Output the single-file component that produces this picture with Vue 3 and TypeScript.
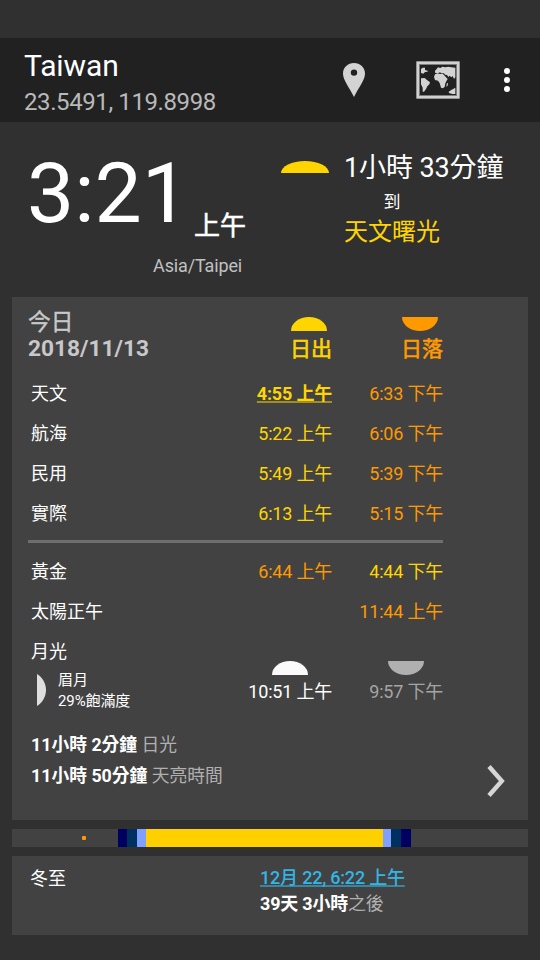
<script setup lang="ts">
interface TimeRow {
  label: string
  rise?: string
  set?: string
  riseTone?: string
  setTone?: string
  current?: boolean
}

const twilight: TimeRow[] = [
  { label: '天文', rise: '4:55 上午', set: '6:33 下午', riseTone: 'yellow', setTone: 'orange', current: true },
  { label: '航海', rise: '5:22 上午', set: '6:06 下午', riseTone: 'yellow', setTone: 'orange' },
  { label: '民用', rise: '5:49 上午', set: '5:39 下午', riseTone: 'yellow', setTone: 'orange' },
  { label: '實際', rise: '6:13 上午', set: '5:15 下午', riseTone: 'yellow', setTone: 'orange' },
]

const extra: TimeRow[] = [
  { label: '黃金', rise: '6:44 上午', set: '4:44 下午', riseTone: 'orange', setTone: 'yellow' },
  { label: '太陽正午', set: '11:44 上午', setTone: 'orange' },
]

const lightmap: { width: number; color: string }[] = [
  { width: 106, color: '#424242' },
  { width: 9, color: '#000060' },
  { width: 10, color: '#003060' },
  { width: 9, color: '#80a0ff' },
  { width: 237, color: '#ffd000' },
  { width: 8, color: '#80a0ff' },
  { width: 10, color: '#003060' },
  { width: 10, color: '#000060' },
  { width: 117, color: '#424242' },
]
</script>

<template>
  <main class="screen">
    <header class="bar">
      <div class="place">
        <h1>Taiwan</h1>
        <p>23.5491, 119.8998</p>
      </div>
      <nav class="actions">
        <svg class="pin" viewBox="0 0 22 34" width="22" height="34">
          <path fill="#d3d3d3" fill-rule="evenodd" d="M11 0C4.9 0 0 4.6 0 10.5C0 17 5.8 23.5 11 34C16.2 23.5 22 17 22 10.5C22 4.6 17.1 0 11 0ZM11 6.4A3.2 3.2 0 1 1 11 12.8A3.2 3.2 0 1 1 11 6.4Z" />
        </svg>
        <svg class="map" viewBox="0 0 132 114" width="44" height="38">
          <rect x="1" y="1" width="130" height="112" fill="#d0d0d0" />
          <rect x="9" y="9" width="114" height="96" fill="#7c7c7c" />
          <rect x="12" y="12" width="108" height="90" fill="#212121" />
          <g fill="#d3d3d3">
            <path d="M15 24L20 20L27 20L27 27L35 29L35 32L27 33L22 38L15 36Z" />
            <path d="M15 52L26 51L32 56L42 64L40 70L34 76L30 84L24 92L20 92L20 80L15 70Z" />
            <path d="M57 29L62 24L66 19L73 21L79 17L88 19L97 17L106 19L118 20L118 49L114 54L110 45L106 49L101 44L97 48L93 42L87 41L84 37L76 37L72 34L66 37L57 35Z" />
            <path d="M57 40L64 37L72 39L80 38L86 44L92 51L95 54L91 61L88 67L86 78L80 82L75 80L71 66L66 59L57 57L54 48Z" />
            <path d="M92 68L96 65L95 74L91 77ZM98 92L107 86L113 83L118 80L118 99L109 99L99 96Z" />
          </g>
        </svg>
        <svg class="more" viewBox="0 0 6 24" width="6" height="24">
          <circle cx="3" cy="3" r="3" fill="#fff" />
          <circle cx="3" cy="12" r="3" fill="#fff" />
          <circle cx="3" cy="21" r="3" fill="#fff" />
        </svg>
      </nav>
    </header>

    <section class="hero">
      <div class="clock">
        <div class="now"><span class="digits">3:21</span><span class="ampm">上午</span></div>
        <p class="zone">Asia/Taipei</p>
      </div>
      <span class="dome wide yellow-bg"></span>
      <div class="next">
        <p class="remain">1小時 33分鐘</p>
        <p class="until">到</p>
        <p class="event yellow">天文曙光</p>
      </div>
    </section>

    <section class="card today">
      <div class="row head">
        <div class="date"><span>今日</span><b>2018/11/13</b></div>
        <div class="col yellow"><span class="dome yellow-bg"></span><b>日出</b></div>
        <div class="col orange"><span class="dome down orange-bg"></span><b>日落</b></div>
      </div>

      <div v-for="r in twilight" :key="r.label" class="row">
        <span class="label">{{ r.label }}</span>
        <span :class="['time', r.riseTone, { current: r.current }]">{{ r.rise }}</span>
        <span :class="['time', r.setTone]">{{ r.set }}</span>
      </div>
      <hr />
      <div v-for="r in extra" :key="r.label" class="row">
        <span class="label">{{ r.label }}</span>
        <span :class="['time', r.riseTone]">{{ r.rise }}</span>
        <span :class="['time', r.setTone]">{{ r.set }}</span>
      </div>

      <div class="row moon">
        <div class="label">
          <span>月光</span>
          <div class="phase">
            <svg viewBox="0 0 9 32" width="9" height="32"><path fill="#dedede" d="M0 0C5 3 9 9 9 16C9 23 5 29 0 32Z" /></svg>
            <p><span>眉月</span><span>29%飽滿度</span></p>
          </div>
        </div>
        <div class="mcol"><span class="dome white-bg rise-dome"></span><span>10:51 上午</span></div>
        <div class="mcol dim"><span class="dome down grey-bg set-dome"></span><span>9:57 下午</span></div>
      </div>

      <footer class="summary">
        <div>
          <p><b>11小時 2分鐘</b> 日光</p>
          <p><b>11小時 50分鐘</b> 天亮時間</p>
        </div>
        <svg viewBox="0 0 18 32" width="18" height="32"><path d="M2 1.5L14.8 16L2 30.5" fill="none" stroke="#d6d6d6" stroke-width="4.4" /></svg>
      </footer>
    </section>

    <div class="lightmap">
      <i v-for="(s, n) in lightmap" :key="n" :style="{ width: s.width + 'px', background: s.color }"></i>
      <em></em>
    </div>

    <section class="card solstice">
      <span>冬至</span>
      <div>
        <p><a>12月 22, 6:22 上午</a></p>
        <p class="after"><b>39天 3小時</b>之後</p>
      </div>
    </section>
  </main>
</template>

<style>
body { background: #303030; }
</style>

<style scoped>
* { box-sizing: border-box; }
h1, p { margin: 0; font-weight: 400; white-space: nowrap; }
.screen {
  width: 540px;
  height: 960px;
  padding-top: 38px;
  background: #303030;
  color: #fff;
  font: 18px/24px Roboto, "Noto Sans CJK TC", sans-serif;
  overflow: hidden;
}
svg { display: block; flex: none; }
.yellow { color: #ffd500; }
.orange { color: #ff9900; }
.yellow-bg { background: #ffd500; }
.orange-bg { background: #ff9900; }
.white-bg { background: #fafafa; }
.grey-bg { background: #b0b0b0; }

.bar { display: flex; justify-content: space-between; height: 84px; padding: 9px 30px 0 24px; background: #212121; }
.place h1 { font-size: 30px; line-height: 37px; letter-spacing: -.1px; }
.place p { font-size: 24px; line-height: 36px; letter-spacing: -.4px; color: #b9b9b9; }
.actions { display: flex; align-items: flex-start; }
.pin { margin-top: 16px; }
.map { margin: 14px 0 0 51px; }
.more { margin: 21px 0 0 44px; }

.hero { display: flex; height: 175px; padding: 30px 0 0 27px; }
.clock { width: 219px; flex: none; }
.now { display: flex; justify-content: space-between; height: 89px; }
.digits { font-size: 84px; line-height: 84px; }
.ampm { align-self: flex-end; font-size: 26px; line-height: 30px; -webkit-text-stroke: .5px; }
.zone { margin-top: 13px; padding-right: 4px; text-align: right; letter-spacing: -.15px; color: #c1c1c1; }
.dome { display: block; flex: none; width: 36px; height: 14px; border-radius: 50% 50% 0 0 / 100% 100% 0 0; }
.dome.down { border-radius: 0 0 50% 50% / 0 0 100% 100%; }
.dome.wide { width: 48px; height: 12px; margin: 9px 15px 0 35px; }
.next { width: 96px; }
.remain { font-size: 27px; line-height: 32px; letter-spacing: -.1px; }
.until { margin-top: 6px; font-size: 17px; text-align: center; }
.event { margin-top: 3px; font-size: 24px; line-height: 30px; }

.card { margin: 0 12px; background: #424242; }
.today { height: 523px; padding: 0 85px 0 16px; }
.row { display: grid; grid-template-columns: 1fr 120px 111px; height: 40px; line-height: 40px; }
.label { padding-left: 3px; }
.time { text-align: right; white-space: nowrap; letter-spacing: -.2px; }
.current { font-weight: 700; text-decoration: underline 2px #a38f1c; text-underline-offset: 1px; text-decoration-skip-ink: none; }
.head { height: 77px; }
.date { display: flex; flex-direction: column; padding-top: 13px; font-size: 22.7px; line-height: 26px; color: #c8c8c8; }
.date span { -webkit-text-stroke: .4px; }
.col { display: flex; flex-direction: column; align-items: flex-end; padding-top: 20px; }
.col .dome { margin-right: 5px; }
.col b { margin-top: 5px; font-size: 21px; line-height: 26px; font-weight: 400; -webkit-text-stroke: .6px; }
hr { height: 3px; margin: 6px 0 9px; border: 0; background: #6e6e6e; }
.moon { height: 80px; }
.moon .label > span { display: block; }
.phase { display: flex; margin-top: 2px; padding-left: 6px; gap: 12px; }
.phase p { display: flex; flex-direction: column; margin-top: -4px; font-size: 15px; line-height: 21px; letter-spacing: -.1px; }
.mcol { display: flex; flex-direction: column; align-items: flex-end; padding-top: 29px; line-height: 24px; }
.mcol span:last-child { margin-top: 5px; white-space: nowrap; letter-spacing: -.2px; }
.dim { color: #a4a4a4; }
.rise-dome { margin-right: 24px; }
.set-dome { margin-right: 19px; }
.summary { display: flex; justify-content: space-between; width: 477px; padding: 17px 0 0 3px; font-size: 17.8px; line-height: 31px; color: #b0b0b0; }
.summary svg { margin-top: 36px; }
.summary b { color: #fff; }

.lightmap { display: flex; position: relative; height: 18px; margin: 9px 12px; }
.lightmap em { position: absolute; left: 70px; top: 7px; width: 4px; height: 4px; border-radius: 1px; background: #ff9900; }
.solstice { display: flex; height: 79px; padding: 9px 18px 0; line-height: 26px; }
.solstice > span { width: 230px; padding-top: 1px; }
.solstice p { letter-spacing: -.2px; }
.solstice a { color: #33b5e5; font-weight: 500; text-decoration: underline 2px #3a86a1; text-underline-offset: 1px; text-decoration-skip-ink: none; }
.after { color: #b0b0b0; }
.after b { color: #fff; }
</style>
